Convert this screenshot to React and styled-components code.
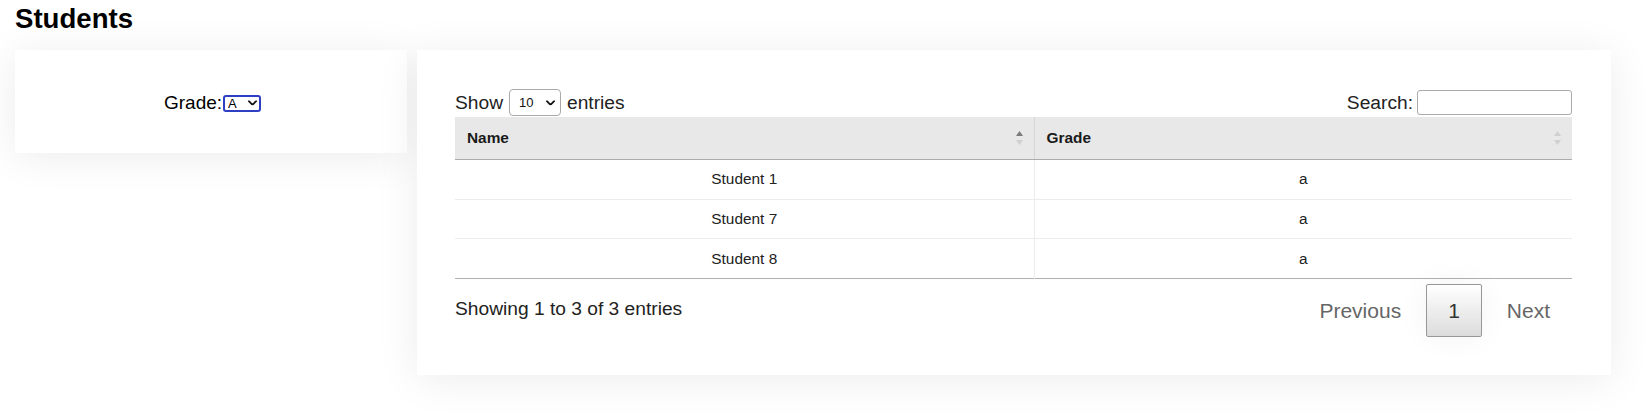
import React from 'react';
import styled, { createGlobalStyle } from 'styled-components';

const students = [
  { name: 'Student 1', grade: 'a' },
  { name: 'Student 7', grade: 'a' },
  { name: 'Student 8', grade: 'a' },
];

const Chevron = ({ size = 9 }) => (
  <svg width={size} height={size * 0.6} viewBox="0 0 10 6" fill="none">
    <path d="M1 1l4 4 4-4" stroke="#111" strokeWidth="2" strokeLinecap="round" strokeLinejoin="round" />
  </svg>
);

const SortIcon = ({ active }) => (
  <svg width="7" height="14" viewBox="0 0 7 14">
    <polygon points="0,5 3.5,0 7,5" fill={active ? '#7a7a7a' : '#d0d0d0'} />
    <polygon points="0,9 3.5,14 7,9" fill="#d0d0d0" />
  </svg>
);

const App = () => {
  return (
    <>
      <GlobalStyle />
      <Page>
        <Title>Students</Title>
        <Columns>
          <FilterCard>
            <FieldLabel>Grade:</FieldLabel>
            <SelectWrap>
              <GradeSelect defaultValue="A">
                <option>A</option>
                <option>B</option>
                <option>C</option>
              </GradeSelect>
              <ChevronSpot $right={4}>
                <Chevron size={9} />
              </ChevronSpot>
            </SelectWrap>
          </FilterCard>

          <TableCard>
            <Controls>
              <ControlLabel>
                Show
                <SelectWrap>
                  <LengthSelect defaultValue="10">
                    <option>10</option>
                    <option>25</option>
                    <option>50</option>
                  </LengthSelect>
                  <ChevronSpot $right={6}>
                    <Chevron size={9} />
                  </ChevronSpot>
                </SelectWrap>
                entries
              </ControlLabel>
              <ControlLabel $tight>
                Search:
                <SearchInput type="search" />
              </ControlLabel>
            </Controls>

            <Table>
              <colgroup>
                <col style={{ width: '579px' }} />
                <col />
              </colgroup>
              <thead>
                <tr>
                  <Th>
                    <HeadInner>
                      Name
                      <SortIcon active />
                    </HeadInner>
                  </Th>
                  <Th>
                    <HeadInner>
                      Grade
                      <SortIcon />
                    </HeadInner>
                  </Th>
                </tr>
              </thead>
              <tbody>
                {students.map((s) => (
                  <tr key={s.name}>
                    <Td>{s.name}</Td>
                    <Td>{s.grade}</Td>
                  </tr>
                ))}
              </tbody>
            </Table>

            <Footer>
              <Info>Showing 1 to 3 of 3 entries</Info>
              <Pager>
                <PageButton>Previous</PageButton>
                <PageButton $current>1</PageButton>
                <PageButton>Next</PageButton>
              </Pager>
            </Footer>
          </TableCard>
        </Columns>
      </Page>
    </>
  );
};

const GlobalStyle = createGlobalStyle`
  body {
    margin: 0;
    background: #fff;
    font-family: "Liberation Sans", Helvetica, Arial, sans-serif;
    color: #111;
  }
`;

const Page = styled.div`
  padding: 0 35px 40px 15px;
`;

const Title = styled.h2`
  margin: 0 0 15px;
  padding-top: 2px;
  font-size: 27.6px;
  line-height: 33px;
  font-weight: bold;
  color: #000;
`;

const Columns = styled.div`
  display: flex;
  align-items: flex-start;
  gap: 10px;
`;

const Card = styled.div`
  background: #fff;
  box-shadow: 0 4px 40px rgba(0, 0, 0, 0.08);
  box-sizing: border-box;
`;

const FilterCard = styled(Card)`
  width: 392px;
  height: 103px;
  display: flex;
  align-items: center;
  justify-content: center;
  padding: 3px 0 0 3px;
`;

const FieldLabel = styled.span`
  font-size: 19px;
  color: #000;
  margin-right: 1px;
`;

const SelectWrap = styled.span`
  position: relative;
  display: inline-flex;
`;

const ChevronSpot = styled.span`
  position: absolute;
  right: ${(p) => p.$right}px;
  top: 50%;
  transform: translateY(-50%);
  display: flex;
  pointer-events: none;
`;

const GradeSelect = styled.select`
  appearance: none;
  width: 38px;
  height: 17px;
  box-sizing: border-box;
  border: 2px solid #2e3fc4;
  border-radius: 3px;
  background: #fff;
  font-family: "Liberation Sans", Arial, sans-serif;
  font-size: 13px;
  line-height: 13px;
  padding: 0 0 0 3px;
  color: #000;
  outline: none;
`;

const TableCard = styled(Card)`
  width: 1194px;
  padding: 38px 39px 38px 38px;
`;

const Controls = styled.div`
  display: flex;
  justify-content: space-between;
  align-items: center;
  height: 29px;
`;

const ControlLabel = styled.label`
  display: flex;
  align-items: center;
  gap: ${(p) => (p.$tight ? '4px' : '6px')};
  font-size: 19.2px;
  color: #222;
`;

const LengthSelect = styled.select`
  appearance: none;
  width: 52px;
  height: 27px;
  box-sizing: border-box;
  border: 1px solid #aaa;
  border-radius: 4px;
  background: #fff;
  font-family: "Liberation Sans", Arial, sans-serif;
  font-size: 13px;
  padding: 0 0 0 9px;
  color: #111;
  outline: none;
`;

const SearchInput = styled.input`
  width: 155px;
  height: 25px;
  box-sizing: border-box;
  border: 1px solid #aaa;
  border-radius: 3px;
  background: #fff;
  outline: none;
  appearance: none;
  font-size: 14px;
`;

const Table = styled.table`
  width: 100%;
  table-layout: fixed;
  border-collapse: collapse;
  border-bottom: 1px solid #b0b0b0;
  font-size: 15.4px;
`;

const Th = styled.th`
  height: 42px;
  padding: 0 11px 0 12px;
  background: #e8e8e8;
  border-bottom: 1px solid #acacac;
  border-right: 1px solid #d6d6d6;
  text-align: left;
  font-weight: bold;
  color: #1a1a1a;
  &:last-child {
    border-right: none;
  }
`;

const HeadInner = styled.div`
  display: flex;
  align-items: center;
  justify-content: space-between;
`;

const Td = styled.td`
  height: 38.7px;
  padding: 0 12px;
  text-align: center;
  color: #222;
  border-top: 1px solid #ececec;
  border-right: 1px solid #ececec;
  &:last-child {
    border-right: none;
  }
`;

const Footer = styled.div`
  display: flex;
  justify-content: space-between;
  align-items: flex-start;
`;

const Info = styled.div`
  margin-top: 19px;
  font-size: 19.2px;
  line-height: 22px;
  color: #222;
`;

const Pager = styled.div`
  display: flex;
  margin-top: 5px;
`;

const PageButton = styled.button`
  box-sizing: border-box;
  margin-left: 3px;
  padding: 10.5px 21px;
  min-width: 31px;
  font-family: "Liberation Sans", Helvetica, Arial, sans-serif;
  font-size: 21px;
  line-height: 30px;
  border: 1px solid ${(p) => (p.$current ? '#979797' : 'transparent')};
  border-radius: 2px;
  color: ${(p) => (p.$current ? '#333' : '#666')};
  background: ${(p) => (p.$current ? 'linear-gradient(to bottom, #fff 0%, #dcdcdc 100%)' : 'transparent')};
  box-shadow: ${(p) => (p.$current ? '0 0 30px rgba(0, 0, 0, 0.05)' : 'none')};
  cursor: default;
`;

export default App;
